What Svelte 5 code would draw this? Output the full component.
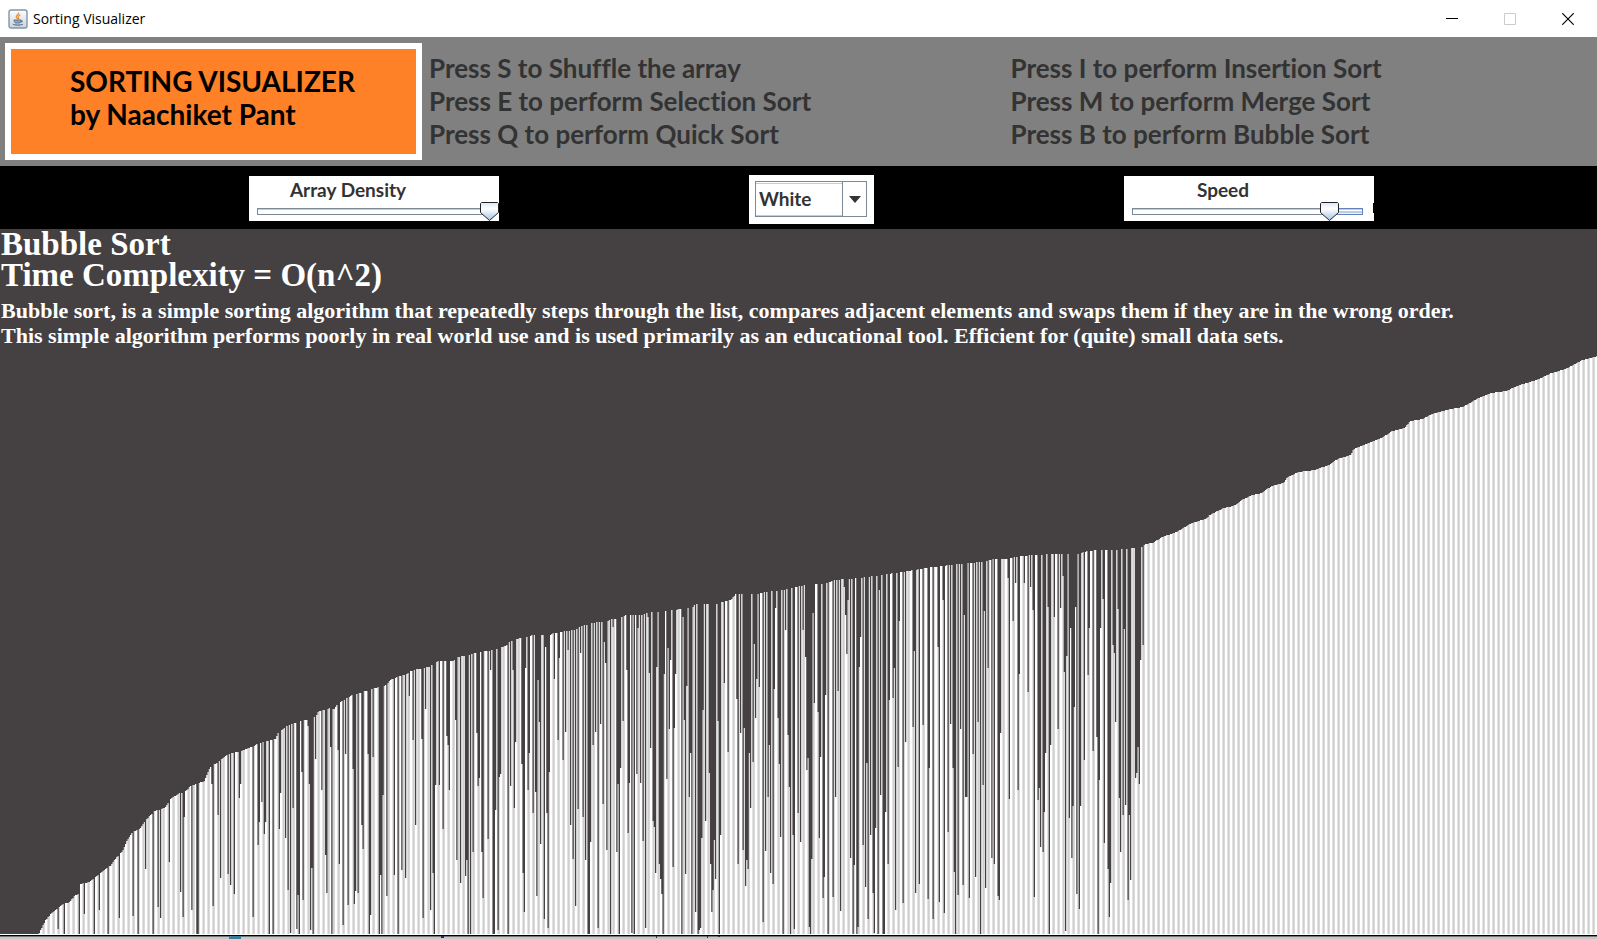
<script>
  const BAR = 1.25;
  const COUNT = 1278;
  const TOP = 229;
  const FLOOR = 934;

  // Upper outline of the bars: x, y pairs.
  const outline = `38 934,41 928,45 920,52 912,57 908,63 904,69 902,74 896,79 893,80 884,89 882,94 878,100 873,107 867,110 866,114 860,122 851,126 841,132 832,139 829,145 820,154 811,164 808,171 798,179 793,184 792,190 786,195 784,204 781,209 768,217 762,227 754,240 751,248 748,262 742,275 739,278 732,283 729,288 725,308 719,316 716,318 711,330 708,334 709,337 704,343 700,352 695,365 691,378 687,383 687,390 680,398 676,405 675,412 670,428 667,438 661,452 661,457 657,467 655,480 652,492 650,505 646,510 641,520 638,533 635,550 635,553 633,567 631,577 629,580 626,597 622,608 621,610 619,620 618,625 615,640 615,645 613,667 611,680 609,692 607,695 604,717 604,722 602,730 600,735 594,757 594,770 591,783 590,805 585,828 583,832 580,860 578,887 574,908 571,933 567,958 564,980 562,993 559,1007 559,1015 557,1030 555,1060 554,1078 554,1083 552,1095 550,1117 550,1133 548,1142 547,1145 544,1152 543,1162 537,1176 532,1191 523,1205 519,1209 515,1223 508,1233 506,1243 499,1252 495,1261 493,1271 486,1283 483,1287 477,1298 472,1314 470,1328 465,1337 459,1350 455,1353 449,1368 443,1381 438,1392 431,1404 428,1410 421,1422 419,1431 414,1450 409,1462 407,1478 398,1491 393,1506 391,1516 386,1536 380,1551 373,1565 369,1582 360,1597 356`;

  // Bars that are still out of order: x, y pairs.
  const unsorted = `58 929,64 934,79 934,84 914,94 934,99 910,107 934,119 918,133 916,137 934,145 869,152 934,158 907,160 918,169 862,180 892,183 917,184 817,191 910,196 934,198 934,211 784,212 906,218 815,220 878,228 874,230 885,234 894,239 798,240 784,252 917,258 845,259 822,261 802,264 834,265 822,269 934,273 934,279 829,280 793,285 838,287 890,290 933,292 808,296 929,297 895,299 934,301 772,303 900,307 726,309 784,310 930,311 868,313 934,315 759,321 790,325 855,326 893,330 747,331 934,338 750,339 864,343 925,345 754,348 905,353 769,354 904,355 891,358 893,361 825,363 849,367 754,369 934,370 915,373 757,379 934,380 875,381 934,382 795,386 896,394 875,398 934,401 870,405 878,409 696,413 740,415 825,421 739,423 918,425 709,430 910,432 873,434 934,435 785,439 785,442 934,443 829,446 736,448 745,449 790,455 720,456 860,460 883,465 876,466 860,468 934,470 934,473 852,476 733,478 786,479 778,481 852,483 898,487 839,490 670,493 934,494 934,495 810,497 930,499 777,500 774,507 934,510 786,513 670,514 808,515 742,521 764,523 873,524 912,525 668,528 790,529 753,533 813,535 792,536 896,538 680,539 722,540 844,544 919,545 647,546 813,548 928,549 772,554 679,558 740,559 658,563 760,565 732,567 650,570 825,572 667,573 859,575 906,578 809,580 653,582 814,583 817,585 860,587 934,589 934,590 842,593 745,595 732,598 928,600 724,603 804,604 642,605 663,606 850,610 934,612 627,616 852,618 784,619 934,620 768,623 721,626 670,628 833,629 783,631 933,634 934,636 774,638 628,640 783,642 841,645 928,647 617,649 673,650 748,653 821,654 827,655 873,656 667,659 864,660 879,661 894,663 934,664 674,666 779,668 648,669 729,670 660,673 867,674 728,675 674,681 934,683 617,684 720,685 874,686 686,689 797,690 753,691 934,695 912,697 934,699 930,700 928,701 838,702 710,705 821,709 773,710 864,711 912,713 890,714 840,715 879,717 721,719 934,720 835,724 683,727 752,736 699,738 864,740 733,742 850,744 728,745 886,746 860,748 869,749 753,750 808,752 840,753 762,754 644,755 718,756 679,759 687,763 922,765 851,768 797,769 745,770 873,773 884,774 689,775 608,777 752,778 718,779 764,780 837,783 934,785 630,787 598,788 735,789 787,790 934,792 835,794 929,797 813,800 842,803 630,805 657,806 770,808 758,809 927,810 934,811 859,813 613,814 703,817 712,819 838,820 757,822 898,824 877,825 695,827 934,832 897,835 797,837 691,838 691,840 911,844 587,845 615,846 654,848 600,850 858,852 934,854 865,856 934,858 927,859 667,860 637,863 845,865 887,866 763,868 919,870 835,873 893,874 933,875 828,877 847,878 934,879 590,880 795,883 934,884 934,885 812,888 864,889 700,893 698,894 668,895 910,898 767,899 621,902 903,905 742,912 689,913 727,914 651,915 893,919 884,922 794,923 725,927 702,928 899,929 768,932 647,933 919,937 647,939 902,942 600,944 913,947 832,950 724,953 768,954 872,955 934,958 895,960 729,962 895,963 885,964 615,965 797,966 797,969 898,972 754,975 877,977 722,980 934,983 785,984 611,985 888,988 668,991 858,994 864,997 896,999 900,1000 733,1007 724,1008 578,1009 799,1013 621,1015 583,1017 890,1018 790,1019 674,1024 583,1027 740,1028 692,1030 587,1032 911,1033 610,1034 897,1037 800,1039 788,1040 847,1042 820,1043 852,1044 812,1045 753,1047 934,1048 607,1049 934,1050 745,1054 617,1057 715,1058 729,1060 608,1062 853,1063 576,1064 672,1065 931,1066 656,1069 818,1070 628,1071 858,1073 806,1074 707,1075 607,1076 894,1079 909,1080 806,1084 760,1087 675,1089 628,1092 928,1093 751,1096 737,1098 934,1099 780,1100 628,1102 656,1103 599,1104 843,1108 869,1109 917,1110 883,1112 887,1113 645,1114 653,1115 722,1118 609,1119 798,1120 852,1122 656,1123 815,1124 629,1125 805,1127 900,1129 815,1130 880,1135 778,1136 773,1138 747,1139 784,1140 660,1143 645`;

  const pairs = (text) => text.split(',').map((p) => p.split(' ').map(Number));

  function buildTops() {
    const points = pairs(outline);
    const tops = [];
    let s = 0;
    for (let i = 0; i < COUNT; i++) {
      const x = i * BAR;
      if (x < points[0][0]) {
        tops.push(FLOOR);
        continue;
      }
      while (s < points.length - 2 && points[s + 1][0] <= x) s++;
      const [x0, y0] = points[s];
      const [x1, y1] = points[s + 1];
      tops.push(Math.round(y0 + ((x - x0) / (x1 - x0)) * (y1 - y0)));
    }
    for (const [x, y] of pairs(unsorted)) tops[Math.round(x / BAR)] = y;
    return tops;
  }

  const bars =
    `M0 ${FLOOR - TOP}` +
    buildTops()
      .map((y, i) => `V${y - TOP}H${(i + 1) * BAR}`)
      .join('') +
    `V${FLOOR - TOP}Z`;

  const leftKeys = [
    'Press S to Shuffle the array',
    'Press E to perform Selection Sort',
    'Press Q to perform Quick Sort'
  ];
  const rightKeys = [
    'Press I to perform Insertion Sort',
    'Press M to perform Merge Sort',
    'Press B to perform Bubble Sort'
  ];

  let density = $state(100);
  let speed = $state(85);
  let colour = $state('White');
</script>

<div class="window">
  <header class="titlebar">
    <svg class="java" viewBox="0 0 20 20" aria-hidden="true">
      <defs>
        <linearGradient id="tile" x1="0" y1="0" x2="0" y2="1">
          <stop offset="0" stop-color="#fdfdfd" />
          <stop offset="1" stop-color="#ccd3da" />
        </linearGradient>
      </defs>
      <rect x="1" y="1" width="18" height="18" rx="2" fill="url(#tile)" stroke="#8296a8" stroke-width="1.4" />
      <path d="M10.5 3.5c1 1.800-2.600 2.500-2.200 4.500.2 1 1.200 1.500 1.500 2.200M12.400 5.700c-1.400.8-2.600 1.400-2.200 2.700.3.900.9 1 .3 2" fill="none" stroke="#e8892f" stroke-width="1.200" />
      <path d="M6 11h7c0 1.500-.6 2.600-1.400 3H7.500C6.600 13.600 6 12.500 6 11zM13 11.500c2-.4 2 1.700-.7 1.900M4.800 15.200c2.500 1.400 7.700 1.400 10.200 0" fill="#8fa6bb" stroke="#5c7a96" stroke-width="1" />
    </svg>
    <span class="caption">Sorting Visualizer</span>
    <div class="window-buttons">
      <button aria-label="Minimize">
        <svg viewBox="0 0 12 12"><path d="M0 5.500H12" stroke="#000" /></svg>
      </button>
      <button aria-label="Maximize" disabled>
        <svg viewBox="0 0 12 12"><path d="M.5.5H11.500V11.500H.5Z" fill="none" stroke="#ccc" /></svg>
      </button>
      <button aria-label="Close">
        <svg viewBox="0 0 12 12"><path d="M.3.300 11.700 11.700M11.700.300.3 11.700" stroke="#000" stroke-width="1.200" /></svg>
      </button>
    </div>
  </header>

  <section class="intro">
    <h1 class="badge">SORTING VISUALIZER<br />by Naachiket Pant</h1>
    <ul>
      {#each leftKeys as line}<li>{line}</li>{/each}
    </ul>
    <ul>
      {#each rightKeys as line}<li>{line}</li>{/each}
    </ul>
  </section>

  <section class="controls">
    <div class="panel">
      <label for="density">Array Density</label>
      <input id="density" type="range" bind:value={density} style="--at: {density}%" />
    </div>
    <div class="picker">
      <select aria-label="Bar colour" bind:value={colour}>
        <option>White</option>
        <option>Red</option>
        <option>Green</option>
        <option>Blue</option>
      </select>
      <span class="arrow"></span>
    </div>
    <div class="panel notch">
      <label for="speed">Speed</label>
      <input id="speed" type="range" bind:value={speed} style="--at: {speed}%" />
    </div>
  </section>

  <main>
    <svg class="chart" viewBox="0 0 1597 705" preserveAspectRatio="none" role="img" aria-label="Array being sorted">
      <defs>
        <pattern id="stripes" width="5" height="705" patternUnits="userSpaceOnUse">
          <rect width="5" height="705" fill="#fff" />
          <rect x="2" width="1" height="705" fill="#e2e2e2" />
          <rect x="3" width="1" height="705" fill="#cfcfcf" />
          <rect x="4" width="1" height="705" fill="#dadada" />
        </pattern>
      </defs>
      <path d={bars} fill="url(#stripes)" />
    </svg>
    <div class="about">
      <h2>Bubble Sort</h2>
      <h2>Time Complexity = O(n^2)</h2>
      <p>
        Bubble sort, is a simple sorting algorithm that repeatedly steps through the list, compares adjacent elements and swaps them if they are in the wrong order.<br />
        This simple algorithm performs poorly in real world use and is used primarily as an educational tool. Efficient for (quite) small data sets.
      </p>
    </div>
  </main>
  <footer>
    <svg viewBox="0 0 720 3" aria-hidden="true">
      <path d="M229 0h12v3h-12z" fill="#3c7d96" />
      <path d="M441 0h3v2h-3z" fill="#22227a" />
      <path d="M656 0h1v2h-1zM707 0h1v2h-1zM718 0h2v1h-2z" fill="#333" />
    </svg>
  </footer>
</div>

<style>
  :global(body) {
    margin: 0;
  }
  .window {
    min-height: 100vh;
    display: flex;
    flex-direction: column;
    background: #000;
    font-family: Lato, sans-serif;
    font-variant-ligatures: none;
    color: #333;
  }
  .titlebar {
    height: 37px;
    display: flex;
    align-items: center;
    padding-left: 8px;
    background: #fff;
  }
  .java {
    width: 20px;
    height: 20px;
  }
  .caption {
    margin-left: 5px;
    font: 14px/20px 'Open Sans', sans-serif;
    color: #000;
  }
  .window-buttons {
    margin-left: auto;
    display: flex;
  }
  .window-buttons button {
    width: 58px;
    height: 36px;
    padding: 0;
    border: 0;
    background: none;
    display: grid;
    place-items: center;
  }
  .window-buttons svg {
    width: 12px;
    height: 12px;
  }
  .intro {
    display: grid;
    grid-template-columns: 417px 1fr 1fr;
    column-gap: 7px;
    padding: 6px 12px 6px 5px;
    background: #808080;
  }
  .badge {
    margin: 0;
    box-sizing: border-box;
    height: 117px;
    padding: 16px 0 0 59px;
    border: 6px solid #fff;
    background: #ff8127;
    color: #000;
    font-size: 28px;
    line-height: 33px;
    font-weight: 700;
    white-space: nowrap;
  }
  ul {
    margin: 0;
    padding: 9px 0 0;
    list-style: none;
    font-size: 26px;
    line-height: 33px;
    font-weight: 700;
    white-space: nowrap;
  }
  .controls {
    height: 63px;
    box-sizing: border-box;
    display: flex;
    justify-content: center;
    align-items: center;
    gap: 250px;
    padding: 2px 0 0 26px;
  }
  .panel {
    position: relative;
    width: 250px;
    height: 45px;
    display: flex;
    flex-direction: column;
    justify-content: space-between;
    background: #fff;
  }
  .notch::after {
    content: '';
    position: absolute;
    right: 0;
    top: 27px;
    width: 1px;
    height: 10px;
    background: #000;
  }
  label {
    padding: 2px 52px 0 0;
    text-align: center;
    font-size: 19px;
    line-height: 24px;
    font-weight: 700;
  }
  input {
    appearance: none;
    width: 100%;
    height: 19px;
    margin: 0;
    background:
      linear-gradient(#b8cfe5, #b8cfe5) 9px 7px / calc(100% - 21px) 1px no-repeat,
      linear-gradient(90deg, #fff var(--at), transparent var(--at)) 9px 8px / calc(100% - 21px) 4px no-repeat,
      linear-gradient(#fff 1px, #b8cfe5 1px 3px, #e8f0fa 3px) 9px 8px / calc(100% - 21px) 4px no-repeat,
      linear-gradient(90deg, #7a8a99 var(--at), #6382bf var(--at)) 8px 6px / calc(100% - 19px) 7px no-repeat;
  }
  input::-webkit-slider-thumb {
    appearance: none;
    width: 19px;
    height: 19px;
    background: url("data:image/svg+xml,%3Csvg xmlns='http://www.w3.org/2000/svg' viewBox='0 0 19 19'%3E%3Cdefs%3E%3ClinearGradient id='g' x2='0' y2='1'%3E%3Cstop stop-color='%23dbe7f6'/%3E%3Cstop offset='.35' stop-color='white'/%3E%3Cstop offset='1' stop-color='%23a3c0e5'/%3E%3C/linearGradient%3E%3C/defs%3E%3Cpath d='M1.500.5H17.500L18.500 1.500V10.500L9.500 18.500L.5 10.500V1.500Z' fill='url(%23g)' stroke='%23222'/%3E%3C/svg%3E");
  }
  .picker {
    position: relative;
    box-sizing: border-box;
    width: 125px;
    height: 49px;
    margin-top: 2px;
    padding: 6px;
    background: #fff;
  }
  select {
    appearance: none;
    box-sizing: border-box;
    width: 112px;
    height: 36px;
    padding: 0 3px;
    border: 1px solid #7a8a99;
    border-radius: 0;
    background:
      linear-gradient(#7a8a99, #7a8a99) 86px 0 / 1px 100% no-repeat,
      linear-gradient(#b8cfe5, #b8cfe5) 0 1px / 86px 1px no-repeat,
      linear-gradient(#b8cfe5, #b8cfe5) 0 33px / 86px 1px no-repeat,
      #fff;
    color: #333;
    font: 700 19px/30px Lato, sans-serif;
  }
  .arrow {
    position: absolute;
    top: 21px;
    right: 13px;
    border: 6px solid transparent;
    border-top: 7px solid #333;
    border-bottom: 0;
    pointer-events: none;
  }
  main {
    flex: 1;
    position: relative;
    background: #454142;
  }
  .chart {
    position: absolute;
    inset: 0;
    width: 100%;
    height: 100%;
  }
  .about {
    position: relative;
    padding: 0 1px;
    color: #fff;
    font-family: 'Liberation Serif', serif;
    font-weight: 700;
    white-space: nowrap;
  }
  h2 {
    margin: 0;
    font-size: 33px;
    line-height: 31px;
  }
  p {
    margin: 7px 0 0;
    font-size: 22px;
    line-height: 25px;
  }
  footer {
    height: 5px;
    box-sizing: border-box;
    border-top: 1px solid #fff;
    background: linear-gradient(#000 1px, #777 1px 2px, #c8c8c8 2px);
    display: flex;
    align-items: flex-end;
  }
  footer svg {
    display: block;
    width: 720px;
    height: 3px;
  }
</style>
